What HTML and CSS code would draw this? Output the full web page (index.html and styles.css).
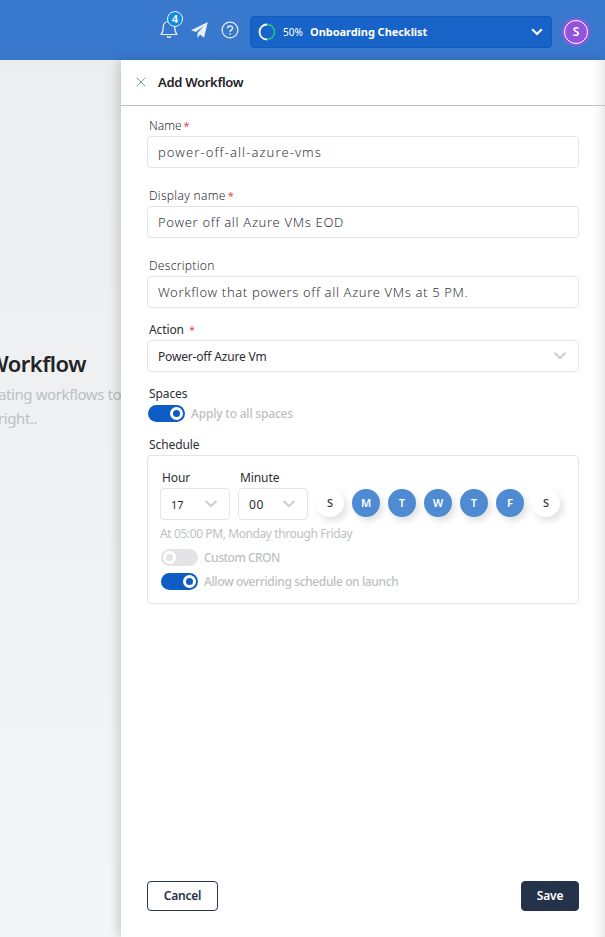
FILE: index.html
```
<!DOCTYPE html>
<html lang="en">
<head>
<meta charset="utf-8">
<title>Add Workflow</title>
<link rel="stylesheet" href="styles.css">
</head>
<body>
<header class="topbar">
  <div class="bell">
    <svg width="18" height="20" viewBox="0 0 18 20" fill="none" stroke="#e8eef8" stroke-width="1.2" stroke-linejoin="round"><path d="M1 15.5C3 13.5 3.2 12 3.2 8.500C3.200 4.500 5.500 2.500 9 2.500S14.800 4.500 14.800 8.500C14.800 12 15 13.500 17 15.500Z"/><path d="M7 17.200Q9 19.500 11 17.200" stroke-width="1.500"/></svg>
    <span class="badge">4</span>
  </div>
  <svg class="plane" width="17" height="17" viewBox="0 0 17 17" fill="#e8eef8"><path d="M16.800 0L0 8.300L4.700 10L12.800 3.900L6.500 11V16L9.100 12.500L13 15.800Z"/></svg>
  <svg class="help" width="18" height="18" viewBox="0 0 18 18" fill="none" stroke="#e8eef8" stroke-width="1.250"><circle cx="9" cy="9" r="7.900"/><path d="M6.600 7.200C6.600 4.200 11.600 4.200 11.600 7.100C11.600 8.900 9.100 8.800 9.100 10.900" stroke-width="1.400"/><circle cx="9.100" cy="13" r=".5" fill="#e8eef8" stroke-width=".7"/></svg>
  <div class="checklist">
    <svg width="18" height="18" viewBox="0 0 18 18" fill="none" stroke-width="1.800"><path d="M9 1.500A7.500 7.500 0 0 0 9 16.500" stroke="#fff"/><path d="M9 1.500A7.500 7.500 0 0 1 9 16.500" stroke="#20b892"/></svg>
    <span class="percent">50%</span>
    <span class="checklist-title">Onboarding Checklist</span>
    <svg class="caret" width="12" height="8" viewBox="0 0 12 8" fill="none" stroke="#fff" stroke-width="2"><path d="M1.200 1.200L6 6L10.800 1.200"/></svg>
  </div>
  <div class="avatar"><span>S</span></div>
</header>
<div class="page">
  <section class="backdrop">
    <h1>Workflow</h1>
    <p class="hint1">ating workflows to</p>
    <p class="hint2">right..</p>
  </section>
  <main class="drawer">
    <div class="drawer-head">
      <svg width="10" height="10" viewBox="0 0 10 10" fill="none" stroke="#8199a3" stroke-width="1"><path d="M.7 .7L9.300 9.300M9.300 .7L.7 9.300"/></svg>
      <h2>Add Workflow</h2>
    </div>
    <div class="form">
      <label class="label wide"><span class="t-name">Name</span><i>*</i></label>
      <div class="input"><span class="v-name">power-off-all-azure-vms</span></div>
      <label class="label wide gap"><span class="t-display">Display name</span><i>*</i></label>
      <div class="input"><span class="v-display">Power off all Azure VMs EOD</span></div>
      <label class="label wide gap"><span class="t-desc">Description</span></label>
      <div class="input"><span class="v-desc">Workflow that powers off all Azure VMs at 5 PM.</span></div>
      <label class="label action"><span class="t-action">Action</span><i>*</i></label>
      <div class="select"><span class="v-action">Power-off Azure Vm</span><svg width="12" height="8" viewBox="0 0 12 8" fill="none" stroke="#ccc" stroke-width="2" stroke-linecap="round"><path d="M1.200 1.500L6 6.200L10.800 1.500"/></svg></div>
      <label class="label spaces"><span>Spaces</span></label>
      <div class="toggle-row"><span class="toggle on"></span><span class="t-apply">Apply to all spaces</span></div>
      <label class="label schedule"><span>Schedule</span></label>
      <div class="card">
        <div class="pickers">
          <div class="picker"><label>Hour</label><div class="select small"><span>17</span><svg width="12" height="8" viewBox="0 0 12 8" fill="none" stroke="#ccc" stroke-width="2" stroke-linecap="round"><path d="M1.200 1.500L6 6.200L10.800 1.500"/></svg></div></div>
          <div class="picker"><label class="t-minute">Minute</label><div class="select small minute"><span>00</span><svg width="12" height="8" viewBox="0 0 12 8" fill="none" stroke="#ccc" stroke-width="2" stroke-linecap="round"><path d="M1.200 1.500L6 6.200L10.800 1.500"/></svg></div></div>
          <div class="days"><b class="off">S</b><b>M</b><b>T</b><b>W</b><b>T</b><b>F</b><b class="off">S</b></div>
        </div>
        <p class="summary">At 05:00 PM, Monday through Friday</p>
        <div class="toggle-row"><span class="toggle"></span><span class="t-cron">Custom CRON</span></div>
        <div class="toggle-row second"><span class="toggle on"></span><span class="t-allow">Allow overriding schedule on launch</span></div>
      </div>
      <footer class="actions"><button class="cancel">Cancel</button><button class="save">Save</button></footer>
    </div>
  </main>
</div>
</body>
</html>
```
FILE: styles.css
```
*, *::before { box-sizing: border-box; }
body { margin: 0; width: 605px; height: 937px; overflow: hidden; font-family: "Noto Sans", "Open Sans", sans-serif; font-size: 12px; color: #2b2d33; }
h1, h2, p { margin: 0; }
span, label, h1, h2, p { white-space: nowrap; }
svg { flex: none; display: block; }
.topbar { height: 60px; display: flex; align-items: flex-start; background: #3878cd; padding-left: 160px; }
.bell { position: relative; width: 18px; margin-top: 19px; }
.badge { position: absolute; left: 7px; top: -8px; width: 16px; height: 16px; border: 1px solid #e8f3ff; border-radius: 50%; background: #168bd9; color: #fff; font-size: 11px; font-weight: 600; line-height: 14px; text-align: center; }
.plane { margin: 22px 0 0 13px; }
.help { margin: 21px 0 0 13px; }
.checklist { display: flex; align-items: center; width: 302px; height: 32px; margin: 16px 0 0 11px; padding: 0 14px 0 7px; background: #1863c7; border: 1px solid #125bc0; border-radius: 4px; color: #fff; }
.percent { margin: -1px 0 0 7px; width: 27px; font-size: 10px; }
.checklist-title { margin-top: -1px; font-weight: 700; font-size: 11px; letter-spacing: -.05px; }
.caret { margin-left: auto; margin-right: -6px; }
.avatar { width: 28px; height: 28px; margin: 18px 0 0 10px; border-radius: 50%; background: #9254de; padding: 2px; }
.avatar span { display: block; height: 24px; border: 1px solid #fff; border-radius: 50%; color: #fff; text-align: center; font-size: 12px; font-weight: 600; line-height: 22px; }
.page { display: flex; height: 877px; background: linear-gradient(#ecedef, #f4f5f7); }
.backdrop { width: 121px; flex: none; padding-top: 287px; overflow: hidden; display: flex; flex-direction: column; }
.backdrop h1 { align-self: flex-end; margin-right: 35px; font-size: 22px; line-height: 32px; font-weight: 600; color: #222326; letter-spacing: -.5px; }
.backdrop p { font-size: 15px; line-height: 24px; color: #bebfc1; margin-left: -2px; letter-spacing: -.4px; }
.backdrop .hint1 { margin-top: 3px; }
.drawer { flex: 1; background: #fff; box-shadow: -3px 0 10px rgba(0,0,0,.17), inset -12px 0 12px -9px rgba(0,0,0,.12); display: flex; flex-direction: column; }
.drawer-head { display: flex; align-items: center; height: 46px; padding: 0 0 1px 15px; border-bottom: 1px solid #bfc1c3; }
.drawer-head h2 { margin-left: 12px; font-size: 13px; font-weight: 600; color: #222326; letter-spacing: -.3px; }
.form { flex: 1; padding: 10px 26px 26px; display: flex; flex-direction: column; }
.label { display: flex; height: 20px; line-height: 19px; padding-left: 2px; font-size: 12px; letter-spacing: -.1px; }
.wide { font-weight: 300; letter-spacing: .3px; }
.t-name { letter-spacing: 0; }
.label i { color: #e34b4b; font-style: normal; font-weight: 400; margin-left: 2px; font-size: 11px; }
.gap { margin-top: 18px; }
.input, .select { display: flex; align-items: center; height: 32px; flex: none; padding: 0 12px 0 10px; border: 1px solid #e5e5e5; border-radius: 4px; font-size: 13px; }
.input { color: #34373c; font-weight: 300; }
.v-name { letter-spacing: 1.08px; }
.v-display { letter-spacing: .68px; }
.v-desc { letter-spacing: .64px; }
.select { justify-content: space-between; font-size: 12px; }
.v-action { letter-spacing: -.17px; }
.action { margin-top: 12px; }
.action i { margin-left: 5px; }
.spaces { margin-top: 12px; }
.toggle-row { display: flex; align-items: center; height: 18px; gap: 6px; color: #bdbfc1; font-size: 12px; font-weight: 500; padding-left: 1px; }
.toggle { display: flex; align-items: center; flex: none; width: 37px; height: 17px; padding: 0 2px; border-radius: 9px; background: #e4e4e6; }
.toggle::before { content: ""; width: 13px; height: 13px; border: 3px solid #fff; border-radius: 50%; background: #e4e4e6; }
.toggle.on { background: #0d5dc5; justify-content: flex-end; }
.toggle.on::before { background: #0d5dc5; }
.t-apply { letter-spacing: -.2px; }
.t-cron { letter-spacing: -.5px; }
.t-allow { letter-spacing: -.38px; }
.schedule { margin-top: 13px; }
.card { height: 149px; padding: 12px 12px 0; border: 1px solid #e5e5e5; border-radius: 4px; }
.pickers { display: flex; gap: 8px; }
.picker { width: 70px; }
.picker label { display: block; height: 20px; line-height: 19px; padding-left: 2px; letter-spacing: -.1px; }
.t-minute { letter-spacing: -.5px; }
.small { font-size: 11px; }
.minute { font-size: 12px; letter-spacing: .6px; }
.days { display: flex; gap: 8px; padding-top: 21px; }
.days b { width: 28px; height: 28px; border-radius: 50%; background: #4e8bd2; color: #fff; text-align: center; font-size: 11px; font-weight: 600; line-height: 28px; box-shadow: 3px 4px 7px rgba(0,0,0,.12); }
.days .off { background: #fff; color: #333; font-weight: 500; }
.summary { color: #bdbfc1; font-size: 12px; line-height: 20px; margin: 4px 0 4px; letter-spacing: -.4px; }
.second { margin-top: 6px; }
.actions { display: flex; justify-content: space-between; margin-top: auto; }
button { height: 30px; padding: 0 0 1px; border: 1px solid #24324a; border-radius: 4px; font: 600 12px "Noto Sans", sans-serif; letter-spacing: -.2px; }
.cancel { width: 71px; background: #fff; color: #24324a; }
.save { width: 58px; background: #24324a; color: #fff; }
```
